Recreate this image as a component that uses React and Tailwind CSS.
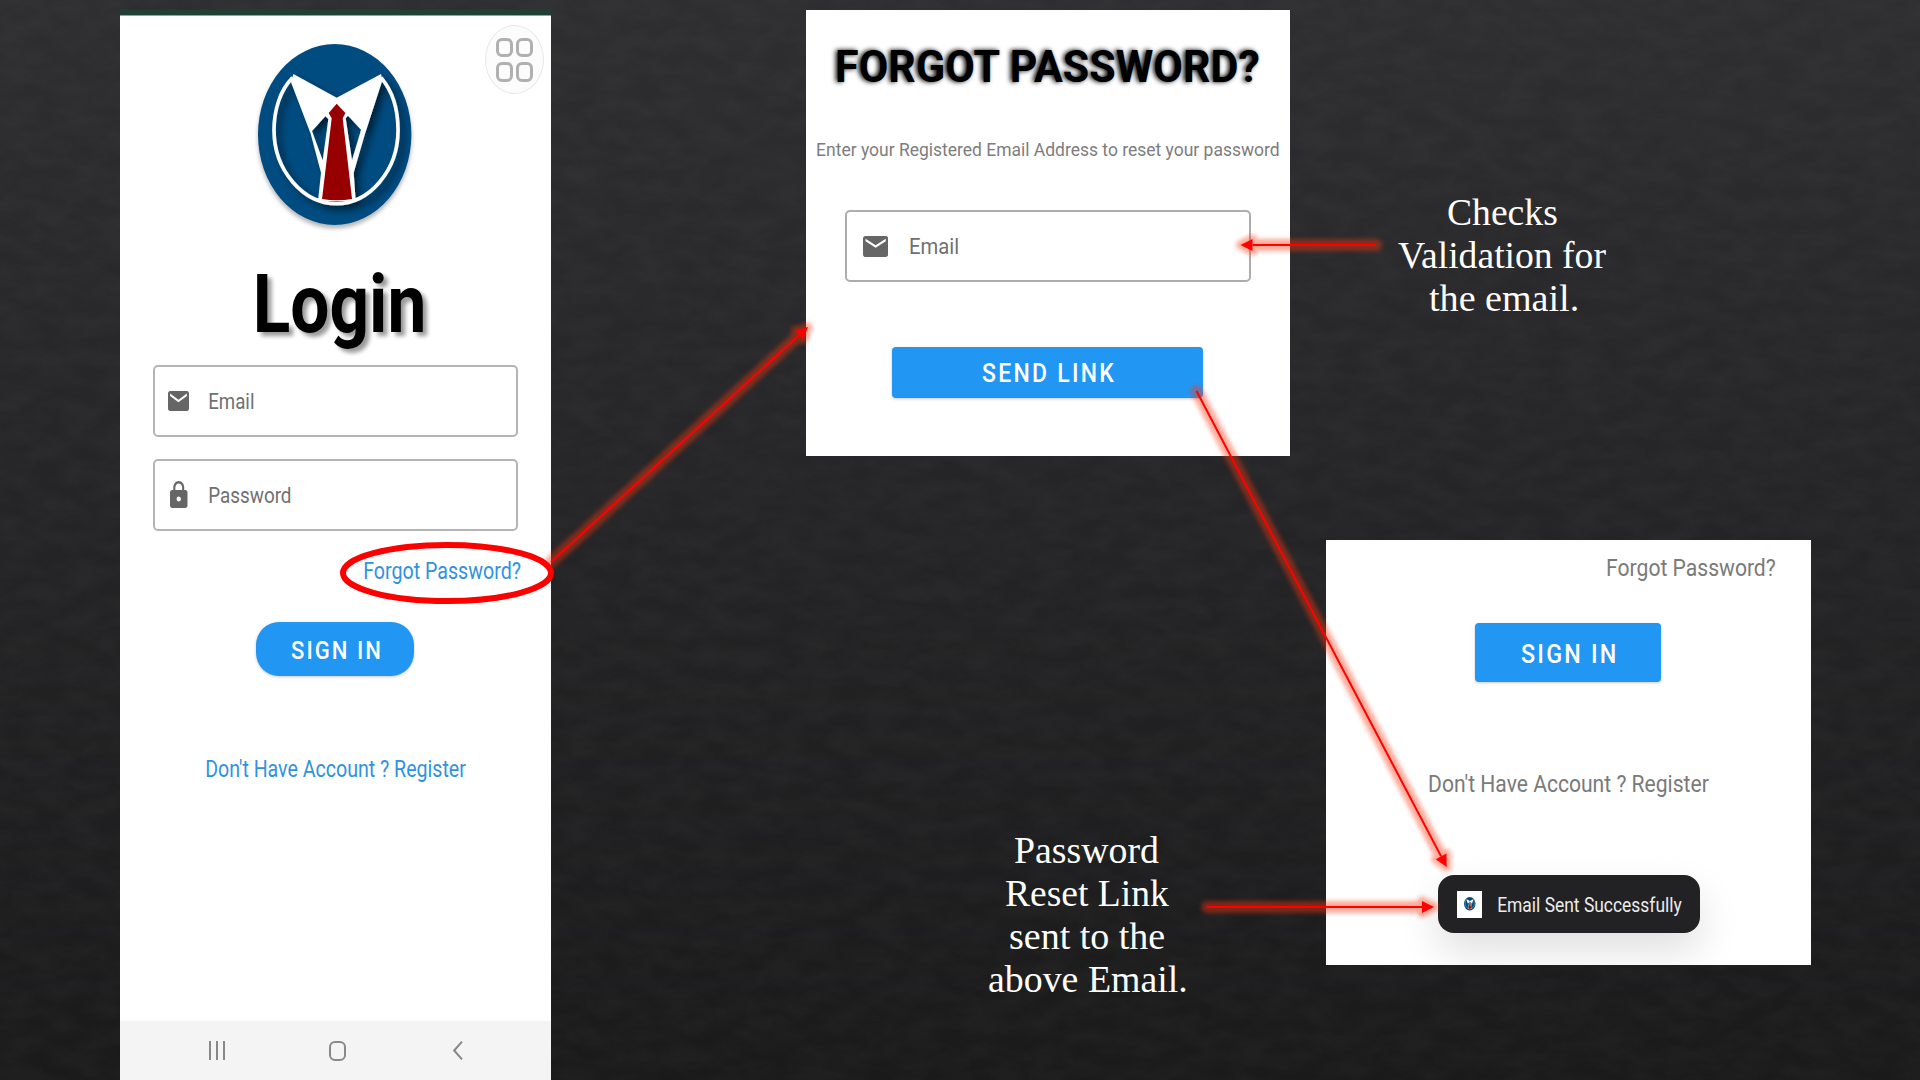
import { useLayoutEffect, useRef } from "react";

/* A single line of text whose inked width is exactly `w` pixels; `dy` nudges its baseline. */
function Fit({ w, dy = 1, className = "", children }) {
  const ref = useRef(null);
  useLayoutEffect(() => {
    const el = ref.current;
    const cs = getComputedStyle(el);
    const ctx = document.createElement("canvas").getContext("2d");
    ctx.font = `${cs.fontWeight} ${cs.fontSize} ${cs.fontFamily}`;
    const ls = parseFloat(cs.letterSpacing) || 0;
    const m = ctx.measureText(children);
    const ink = m.actualBoundingBoxLeft + m.actualBoundingBoxRight + ls * (children.length - 1);
    const s = w / ink;
    el.style.transform = `translate(${m.actualBoundingBoxLeft * s}px, ${dy}px) scaleX(${s})`;
  }, [w, dy, children]);
  return (
    <div className={className} style={{ width: w }}>
      <span ref={ref} className="block w-max origin-left whitespace-nowrap">
        {children}
      </span>
    </div>
  );
}

function Logo({ className, plain }) {
  return (
    <svg viewBox="475 129 460 543" preserveAspectRatio="none" className={className}>
      <defs>
        <filter id="logoShade" x="-20%" y="-20%" width="150%" height="150%">
          <feDropShadow dx="14" dy="14" stdDeviation="11" floodColor="#000" floodOpacity="0.55" />
        </filter>
        <filter id="logoBase" x="-20%" y="-20%" width="140%" height="140%">
          <feDropShadow dx="0" dy="10" stdDeviation="6" floodColor="#000" floodOpacity="0.3" />
        </filter>
        <clipPath id="logoClip">
          <ellipse cx="705" cy="400.500" rx="230" ry="271.500" />
        </clipPath>
      </defs>
      <ellipse cx="705" cy="400.500" rx="230" ry="271.500" fill="#004c80" filter={plain ? undefined : "url(#logoBase)"} />
      <g clipPath="url(#logoClip)">
        <g filter={plain ? undefined : "url(#logoShade)"}>
          <path
            d="M579 230C540 268 523 330 523 388C523 508 610 608 710 608C810 608 895 508 895 388C895 330 880 272 844 230"
            fill="none"
            stroke="#fff"
            strokeWidth="11"
          />
          <path
            fillRule="evenodd"
            d="M581 219L711 290L844 219L848 238L796 398L762 515L768 600H655L664 515L633 398L574 244ZM637 390L677 346L686 354L669 478ZM784 386L745 344L738 352L757 478Z"
            fill="#fff"
          />
        </g>
        <path d="M711 308L737 336L729 352L757 594Q711 602 667 594L696 352L687 336Z" fill="#970000" />
      </g>
    </svg>
  );
}

function Mail({ className }) {
  return (
    <svg viewBox="2 4 20 16" preserveAspectRatio="none" className={className} fill="#666">
      <path d="M20 4H4c-1.100 0-1.990.9-1.990 2L2 18c0 1.100.9 2 2 2h16c1.100 0 2-.9 2-2V6c0-1.100-.9-2-2-2zm0 4l-8 5-8-5V6l8 5 8-5v2z" />
    </svg>
  );
}

function Lock({ className }) {
  return (
    <svg viewBox="4 1 16 21" preserveAspectRatio="none" className={className} fill="#666">
      <path d="M18 8h-1V6c0-2.760-2.240-5-5-5S7 3.240 7 6v2H6c-1.100 0-2 .9-2 2v10c0 1.100.9 2 2 2h12c1.100 0 2-.9 2-2V10c0-1.100-.9-2-2-2zm-6 9c-1.100 0-2-.9-2-2s.9-2 2-2 2 .9 2 2-.9 2-2 2zm3.100-9H8.900V6c0-1.710 1.390-3.100 3.100-3.100 1.710 0 3.100 1.390 3.100 3.100v2z" />
    </svg>
  );
}

function Backdrop() {
  return (
    <svg className="absolute inset-0 h-full w-full opacity-[0.03]">
      <filter id="slate">
        <feTurbulence type="fractalNoise" baseFrequency="0.03 0.06" numOctaves="5" seed="7" />
        <feColorMatrix values="0 0 0 0 0.5  0 0 0 0 0.5  0 0 0 0 0.5  2 0 0 0 -0.5" />
      </filter>
      <rect width="100%" height="100%" filter="url(#slate)" />
    </svg>
  );
}

function LoginPhone() {
  return (
    <section className="relative mt-[10px] ml-[120px] flex h-[1070px] w-[431px] shrink-0 flex-col bg-white font-[Roboto,sans-serif] leading-none">
      <div className="h-[6px] shrink-0 border-b border-[#8fa39c] bg-[#1e4035]" />
      <div className="absolute top-[15px] left-[365px] flex h-[69px] w-[59px] items-center justify-center rounded-[50%] border border-[#e8e8e8] bg-[#fcfcfc]">
        <div className="grid grid-cols-2 gap-x-[3.500px] gap-y-[5px]">
          {[0, 1, 2, 3].map((i) => (
            <span key={i} className="h-[19.500px] w-[17px] rounded-[6px] border-[3px] border-[#b0b0b0]" />
          ))}
        </div>
      </div>
      <Logo className="mt-[27.500px] ml-[138.300px] h-[181px] w-[153.400px] shrink-0 overflow-visible" />
      <Fit w={166} dy={0} className="mt-[38.500px] ml-[137.300px] text-[82px] font-bold text-black [text-shadow:5px_4px_5px_rgba(0,0,0,0.4)]">
        Login
      </Fit>
      <div className="mt-[20px] ml-[33px] flex h-[72px] w-[365px] shrink-0 items-center rounded-[5px] border-2 border-[#b4b4b4] pl-[13.300px]">
        <Mail className="h-[20px] w-[21px]" />
        <Fit w={44.300} className="ml-[19.700px] text-[22px] text-[#707070]">Email</Fit>
      </div>
      <div className="mt-[22px] ml-[33px] flex h-[72px] w-[365px] shrink-0 items-center rounded-[5px] border-2 border-[#b4b4b4] pl-[15px]">
        <Lock className="mb-[1px] h-[27px] w-[17.500px]" />
        <Fit w={81.300} dy={0.6} className="ml-[21.500px] text-[22px] text-[#707070]">Password</Fit>
      </div>
      <Fit w={156.300} className="mt-[28px] ml-[244.300px] text-[23px] text-[#2f93df]">Forgot Password?</Fit>
      <div className="mt-[40.200px] ml-[136px] flex h-[54px] w-[158px] shrink-0 items-center justify-center rounded-[23px] bg-[#2196f3] shadow-[0_1px_3px_rgba(0,0,0,0.22)]">
        <Fit w={88.500} className="text-[26.500px] font-medium tracking-[2.500px] text-white">SIGN IN</Fit>
      </div>
      <Fit w={260} className="mt-[80.500px] ml-[85.700px] text-[23px] text-[#2f93df]">{"Don't Have Account ? Register"}</Fit>
      <div className="mt-auto flex h-[59px] shrink-0 items-center bg-[#f4f4f4] text-[#888]">
        <div className="ml-[89.300px] flex h-[19px] w-[15.700px] justify-between">
          <span className="w-[2px] bg-[#888]" />
          <span className="w-[2px] bg-[#888]" />
          <span className="w-[2px] bg-[#888]" />
        </div>
        <span className="ml-[103.700px] h-[20px] w-[17.500px] rounded-[6px] border-2 border-[#888]" />
        <svg viewBox="0 0 10 19" className="ml-[107.300px] h-[19px] w-[10px]" fill="none" stroke="#888" strokeWidth="2">
          <path d="M9 0.700L1.200 9.500L9 18.300" />
        </svg>
      </div>
    </section>
  );
}

function ForgotPanel() {
  return (
    <section className="flex h-[446px] w-[484px] shrink-0 flex-col bg-white pt-[34px] font-[Roboto,sans-serif] leading-none">
      <Fit w={422.700} dy={0} className="ml-[30.700px] text-[45px] font-bold text-black [text-shadow:-2px_0_5px_#000]">
        FORGOT PASSWORD?
      </Fit>
      <Fit w={462} dy={-1} className="mt-[51.600px] ml-[11.300px] text-[19px] text-[#7d7d7d]">
        Enter your Registered Email Address to reset your password
      </Fit>
      <div className="mt-[50.900px] ml-[39px] flex h-[72px] w-[406px] items-center rounded-[5px] border-2 border-[#adadad] pl-[15.800px]">
        <Mail className="h-[21px] w-[25.300px]" />
        <Fit w={48} dy={0.3} className="ml-[22.200px] text-[21.500px] text-[#707070]">Email</Fit>
      </div>
      <div className="mt-[65px] ml-[86px] flex h-[51px] w-[311px] items-center justify-center rounded-[4px] bg-[#2196f3] shadow-[0_1px_3px_rgba(0,0,0,0.22)]">
        <Fit w={132} dy={1.4} className="text-[25px] font-medium tracking-[2.500px] text-white">SEND LINK</Fit>
      </div>
    </section>
  );
}

function SentPanel() {
  return (
    <section className="mt-[221.300px] flex h-[425px] w-[485px] shrink-0 flex-col overflow-hidden bg-white pt-[16.300px] font-[Roboto,sans-serif] leading-none">
      <Fit w={168.700} className="ml-[281.300px] text-[23.400px] text-[#7a7a7a]">Forgot Password?</Fit>
      <div className="mt-[43.300px] ml-[149px] flex h-[59.500px] w-[185.700px] items-center justify-center rounded-[4px] bg-[#2196f3] shadow-[0_1px_3px_rgba(0,0,0,0.22)]">
        <Fit w={94} dy={0.6} className="text-[26px] font-medium tracking-[2.500px] text-white">SIGN IN</Fit>
      </div>
      <Fit w={280} className="mt-[90px] ml-[102.700px] text-[23px] text-[#7a7a7a]">{"Don't Have Account ? Register"}</Fit>
      <div className="mt-[79.400px] ml-[111.700px] flex h-[58.500px] w-[262px] items-center rounded-[16px] bg-[#222224] pl-[19.600px] shadow-[0_18px_40px_rgba(0,0,0,0.13)]">
        <div className="flex h-[27px] w-[25px] items-center justify-center bg-white">
          <Logo plain className="h-[13.500px] w-[11.500px]" />
        </div>
        <Fit w={184} className="ml-[15.700px] text-[20.500px] text-[#ececec]">Email Sent Successfully</Fit>
      </div>
    </section>
  );
}

function Caption({ lines, className, dy }) {
  return (
    <div className={`flex flex-col items-center font-['Liberation_Serif',serif] text-[38px] leading-[43px] text-white ${className}`}>
      {lines.map(([text, w]) => (
        <Fit key={text} w={w} dy={dy}>{text}</Fit>
      ))}
    </div>
  );
}

const arrows = [
  [551, 562, 808, 327],
  [1376, 245, 1240.500, 245],
  [1196.500, 391, 1446.700, 867],
  [1207, 907, 1434, 907],
];

function Arrow({ p: [x1, y1, x2, y2] }) {
  const len = Math.hypot(x2 - x1, y2 - y1);
  const ux = (x2 - x1) / len;
  const uy = (y2 - y1) / len;
  const bx = x2 - ux * 12;
  const by = y2 - uy * 12;
  const line = `M${x1} ${y1}L${bx} ${by}`;
  const head = `M${x2} ${y2}L${bx - uy * 6} ${by + ux * 6}L${bx + uy * 6} ${by - ux * 6}Z`;
  return (
    <g>
      <g filter="url(#glow)" opacity="0.42" stroke="#ff3510" fill="#ff3510" strokeLinejoin="round" strokeLinecap="round">
        <path d={line} strokeWidth="12" />
        <path d={head} strokeWidth="9" />
      </g>
      <path d={line} stroke="#f00" strokeWidth="2" />
      <path d={head} fill="#f00" />
    </g>
  );
}

function Annotations() {
  return (
    <svg viewBox="0 0 1920 1080" className="pointer-events-none absolute inset-0 h-[1080px] w-[1920px]" fill="none">
      <filter id="glow" filterUnits="userSpaceOnUse" x="0" y="0" width="1920" height="1080">
        <feGaussianBlur stdDeviation="2" />
      </filter>
      {arrows.map((p) => (
        <Arrow key={p[0]} p={p} />
      ))}
      <ellipse cx="447" cy="573" rx="104" ry="28" stroke="#f00" strokeWidth="6" />
    </svg>
  );
}

export default function App() {
  return (
    <main className="relative h-[1080px] w-[1920px] overflow-hidden bg-linear-to-b from-[#2e2e30] via-[#242426] to-[#1a1a1b]">
      <Backdrop />
      <div className="relative flex h-full items-start">
        <LoginPhone />
        <div className="mt-[10px] ml-[255px] flex w-[484px] shrink-0 flex-col">
          <ForgotPanel />
          <Caption
            dy={2}
            className="mt-[371.400px] ml-[183.300px] w-[196.300px]"
            lines={[["Password", 144], ["Reset Link", 162.700], ["sent to the", 154.300], ["above Email.", 196.300]]}
          />
        </div>
        <div className="ml-[36px] flex w-[485px] shrink-0 flex-col pt-[189.700px]">
          <Caption
            dy={1.300}
            className="ml-[72px] w-[209px]"
            lines={[["Checks", 109], ["Validation for", 208.300], ["the email.", 147.700]]}
          />
          <SentPanel />
        </div>
      </div>
      <Annotations />
    </main>
  );
}
